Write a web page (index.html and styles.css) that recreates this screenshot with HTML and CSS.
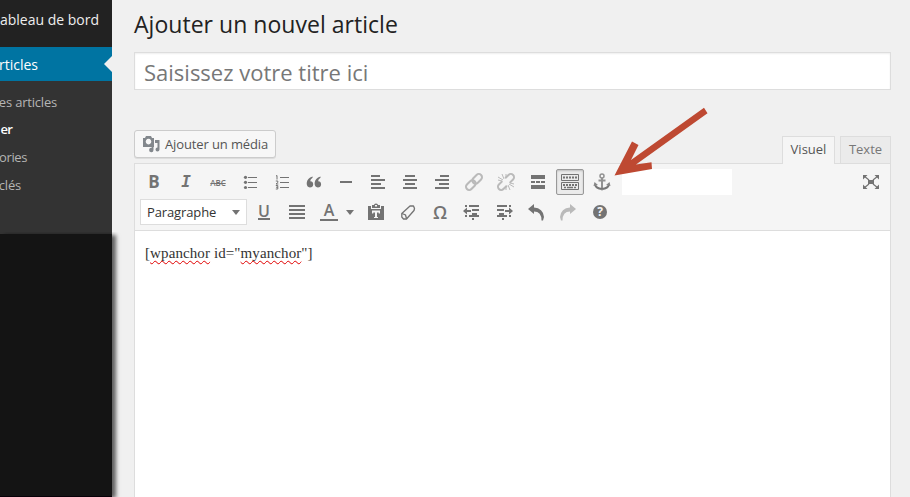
FILE: index.html
```html
<!DOCTYPE html>
<html lang="fr">
<head>
<meta charset="utf-8">
<title>Ajouter un nouvel article</title>
<link rel="stylesheet" href="styles.css">
</head>
<body>
<div class="admin">
  <nav class="sidebar">
    <div class="item dashboard"><span class="w-dash">ableau de bord</span></div>
    <div class="item current"><span class="w-art">rticles</span></div>
    <div class="submenu">
      <div><span class="w-all">es articles</span></div>
      <div class="active"><span class="w-add">er</span></div>
      <div><span class="w-cat">ories</span></div>
      <div><span class="w-tag">clés</span></div>
    </div>
    <div class="panel"></div>
  </nav>
  <main>
    <h1>Ajouter un nouvel article</h1>
    <div class="title-field"><span>Saisissez votre titre ici</span></div>
    <div class="tools">
      <div class="media">
        <svg width="18" height="18" viewBox="0 0 18 18"><path fill="#82878c" fill-rule="evenodd" d="M1 3h2l1-2h5l1 2h2v9H1zM6.500 3.800a2.800 2.800 0 1 0 .01 0z"/><path fill="#82878c" d="M13 5h4.500v9.500a2 2 0 1 1-2-2V8H13zM11.500 11v4a2.200 2.200 0 1 1-1.800-2.200V11z"/></svg>
        <span>Ajouter un média</span>
      </div>
      <div class="tabs"><div class="tab on"><span>Visuel</span></div><div class="tab"><span>Texte</span></div></div>
    </div>
    <div class="editor">
      <div class="toolbar">
        <div class="row">
          <div class="btn"><b class="bold">B</b></div>
          <div class="btn"><b class="ital">I</b></div>
          <div class="btn"><span class="abc">ABC</span></div>
          <div class="btn"><svg viewBox="0 0 20 20"><path class="thin" d="M8 5.500h9M8 10.500h9M8 15.500h9"/><g class="f"><circle cx="5.500" cy="5.300" r="1.600"/><circle cx="5.500" cy="10.300" r="1.600"/><circle cx="5.500" cy="15.500" r="1.600"/></g></svg></div>
          <div class="btn"><svg viewBox="0 0 20 20"><path class="thin" d="M8 5.500h9M8 10.500h9M8 15.500h9M4 4l1-.5v4M3.800 9h2v1.500l-1.800 1.500h2.300M3.800 13.500h2v3.500h-2M4 15.200h2"/></svg></div>
          <div class="btn"><svg viewBox="0 0 20 20"><path class="f" d="M8.600 4.400v1.300Q6.300 7 6.200 9.200 9 9 9.200 12.200q-.2 3.200-3.300 3.200Q2.600 15.200 2.700 11q.4-5 5.900-6.600zM16.500 4.400v1.300q-2.300 1.300-2.400 3.500 2.800-.2 3 3-.2 3.200-3.300 3.200-3.300-.2-3.200-4.400.4-5 5.900-6.600z"/></svg></div>
          <div class="btn"><svg viewBox="0 0 20 20"><path class="bar" d="M4 10h12"/></svg></div>
          <div class="btn"><svg viewBox="0 0 20 20"><path class="bar" d="M3 4h9M3 8h14M3 12h10M3 16h14"/></svg></div>
          <div class="btn"><svg viewBox="0 0 20 20"><path class="bar" d="M5 4h10M3 8h14M5 12h10M3 16h14"/></svg></div>
          <div class="btn"><svg viewBox="0 0 20 20"><path class="bar" d="M8 4h9M3 8h14M7 12h10M3 16h14"/></svg></div>
          <div class="btn dim"><svg viewBox="0 0 20 20"><g transform="rotate(-45 10 10)" fill="none" stroke="#737373" stroke-width="2"><rect x="0" y="6.800" width="11" height="6.400" rx="3.200"/><rect x="9" y="6.800" width="11" height="6.400" rx="3.200"/></g></svg></div>
          <div class="btn dim"><svg viewBox="0 0 20 20"><g transform="rotate(-45 10 10)" fill="none" stroke="#737373" stroke-width="2"><path d="M8 6.800H3.200a3.200 3.200 0 0 0 0 6.400H8M12 6.800h4.800a3.200 3.200 0 0 1 0 6.400H12"/></g><path class="thin" d="M6 2l2 5M2 5l5 3M10 2v4M18 15l-5-3M14 18l-2-5M10 18v-4M2 8l4 1M18 12l-4-1"/></svg></div>
          <div class="btn"><svg viewBox="0 0 20 20"><path class="f" d="M3 3h14v4H3zM3 13h14v4H3zM3 9h4v2H3zM8 9h4v2H8zM13 9h4v2h-4z"/></svg></div>
          <div class="btn pressed"><svg viewBox="0 0 20 20"><path class="thin" d="M1.500 2.500h17v6h-17zM1.500 10.500h17v7h-17z"/><path fill="none" stroke="#737373" stroke-width="2" stroke-dasharray="2 1" d="M3 5.500h14M3 13h14"/><path fill="none" stroke="#737373" stroke-width="1.500" d="M4 15.500h2M7 15.500h6M14 15.500h2"/></svg></div>
          <div class="btn"><svg viewBox="0 0 20 20"><g fill="none" stroke="#929292" stroke-width="2"><circle cx="10" cy="4" r="2" stroke-width="1.500"/><path d="M10 6v11M6.500 8.500h7"/><path d="M3 12.500q1 4 7 4.500 6-.5 7-4.500" stroke="#777"/></g><path fill="#888" d="M1.500 14l1-4 3.500 3zM18.500 14l-1-4-3.500 3zM8 17l2 1.800 2-1.800z"/></svg></div>
          <div class="blank"></div>
          <div class="btn full"><svg viewBox="0 0 20 20"><path class="f" d="M7 8h6v4H7zM2 3h4.500L2 7.500zM18 3v4.500L13.500 3zM2 17v-4.500L6.500 17zM18 17h-4.500l4.500-4.500z"/><path fill="none" stroke="#737373" stroke-width="1.200" d="M3 4l5 4M17 4l-5 4M3 16l5-4M17 16l-5-4"/></svg></div>
        </div>
        <div class="row">
          <div class="select"><span>Paragraphe</span><i class="caret"></i></div>
          <div class="btn under"><b>U</b></div>
          <div class="btn"><svg viewBox="0 0 20 20"><path class="bar" d="M2 4h16M2 8h16M2 12h16M2 16h16"/></svg></div>
          <div class="btn color"><b>A</b></div>
          <div class="more"><i class="caret"></i></div>
          <div class="btn"><svg viewBox="0 0 20 20"><path class="f" d="M2 4h3v3h10V4h3v14H2zM6 6V3h2q0-1.500 2-1.500T12 3h2v3z"/><path fill="#f5f5f5" d="M9 3h2v1.500H9zM6 8.500h8v3h-1.300V10.500H11V15h1v1H8v-1h1v-4.500H7.300v1H6z"/></svg></div>
          <div class="btn"><svg viewBox="0 0 20 20"><path fill="#f5f5f5" stroke="#737373" stroke-width="1.300" stroke-linejoin="round" d="M3.800 11.500L12 4h3.500l1 2.500-.5 2L8.500 17H5.500L3.800 15z"/><path fill="none" stroke="#737373" stroke-width="1.300" d="M4 11.500l3.500 1.500 1 3.500"/></svg></div>
          <div class="btn"><b class="omega">Ω</b></div>
          <div class="btn"><svg viewBox="0 0 20 20"><path class="bar" d="M3 4h2M7 4h10M10 8h7M10 12h5M3 14h2M7 14h10M10 17h2"/><path class="f" d="M1 9l4-3.500V8h4v2H5v2.500z"/></svg></div>
          <div class="btn"><svg viewBox="0 0 20 20"><path class="bar" d="M3 4h10M15 4h2M3 8h7M5 12h5M3 14h10M15 14h2M8 17h2"/><path class="f" d="M19 9l-4-3.500V8h-4v2h4v2.500z"/></svg></div>
          <div class="btn"><svg viewBox="0 0 20 20"><path class="f" d="M2 7l6-5v3.500q9 .5 10 9.500l-1 3.500h-1.500Q15.500 9.500 8 9.500V12z"/></svg></div>
          <div class="btn dim"><svg viewBox="0 0 20 20"><path class="f" d="M18 7l-6-5v3.500Q3 6 2 15l1 3.500h1.500Q4.500 9.500 12 9.500V12z"/></svg></div>
          <div class="btn"><b class="help">?</b></div>
        </div>
      </div>
      <div class="content">[<span class="spell">wpanchor</span> id="<span class="spell">myanchor</span>"]</div>
    </div>
  </main>
  <svg class="arrow" viewBox="0 0 100 74"><path fill="#be4932" d="M.5 71.500L18 37.500 24.500 41 17 56 90 3.700 93.500 9.200 22 60.500 37.500 58.300 38 65z"/></svg>
</div>
</body>
</html>
```
FILE: styles.css
```css
* { box-sizing: border-box; }
body { margin: 0; background: #f0f0f0; font-family: "Open Sans", sans-serif; color: #555; overflow: hidden; }
.admin { display: flex; width: 910px; height: 497px; position: relative; overflow: hidden; }
.sidebar { width: 112px; display: flex; flex-direction: column; background: #222; color: #eee; flex: none; }
.sidebar span { display: flex; justify-content: flex-end; white-space: nowrap; }
.item { font-size: 14px; position: relative; }
.dashboard { height: 47px; line-height: 39px; }
.current { height: 34px; line-height: 35px; background: #0074a2; color: #fff; }
.current::after { content: ""; position: absolute; right: 0; top: 9px; border: 8px solid transparent; border-left: 0; border-right-color: #f0f0f0; }
.submenu { height: 153px; background: #333; color: #b5b5b5; font-size: 13px; line-height: 27.6px; padding-top: 8px; letter-spacing: -.2px; }
.submenu .active { color: #fff; font-weight: 600; margin: -1px 0 1px; letter-spacing: -.8px; }
.w-dash { width: 99px; }
.w-art { width: 38px; }
.w-all { width: 57px; }
.w-add { width: 12px; }
.w-cat { width: 27px; letter-spacing: -.4px; }
.w-tag { width: 21px; }
.panel { flex: 1; background: #141414; border-bottom: 1px solid #080008; box-shadow: 4px 1px 4px rgba(0,0,0,.6); clip-path: inset(-2px -10px 0 0); }
main { flex: 1; padding: 0 19px 0 22px; display: flex; flex-direction: column; }
h1 { margin: 0; height: 52px; font-size: 23px; line-height: 48px; font-weight: 400; color: #222; white-space: nowrap; letter-spacing: .03px; }
.title-field { height: 38px; border: 1px solid #ddd; background: #fff; padding-left: 9px; font-size: 22px; line-height: 39px; color: #777; box-shadow: inset 0 1px 2px rgba(0,0,0,.07); }
.tools { height: 73px; display: flex; justify-content: space-between; align-items: flex-end; }
.media { width: 142px; height: 28px; margin-bottom: 5px; border: 1px solid #ccc; border-radius: 3px; background: #f7f7f7; box-shadow: 0 1px 0 rgba(0,0,0,.08); display: flex; align-items: center; padding-left: 7px; gap: 5px; font-size: 13px; white-space: nowrap; letter-spacing: -.12px; }
.tabs { display: flex; gap: 5px; }
.tab { height: 27px; width: 51px; border: 1px solid #ddd; border-bottom: 0; background: #ebebeb; color: #777; font-size: 13px; line-height: 25px; text-align: center; }
.tab.on { width: 53px; height: 28px; margin-bottom: -1px; background: #f5f5f5; color: #555; position: relative; z-index: 1; }
.editor { flex: 1; border: 1px solid #ddd; border-bottom: 0; background: #fff; }
.toolbar { height: 67px; background: #f5f5f5; border-bottom: 1px solid #ddd; padding: 3px 3px 0; }
.row { display: flex; height: 30px; align-items: center; }
.btn { width: 32px; height: 30px; flex: none; display: flex; align-items: center; justify-content: center; color: #737373; }
.btn svg { width: 20px; height: 20px; flex: none; }
.f { fill: #737373; }
.thin { fill: none; stroke: #737373; stroke-width: 1; }
.bar { fill: none; stroke: #737373; stroke-width: 2; }
.dim { opacity: .45; }
.bold { font-size: 17px; line-height: 20px; }
.ital { font: italic bold 16px/20px "DejaVu Sans Mono", monospace; }
.abc { font-size: 8px; font-weight: 600; letter-spacing: -.1px; text-decoration: line-through; }
.pressed { width: 28px; height: 26px; margin: 0 2px; border: 1px solid #999; border-radius: 2px; background: #ebebeb; box-shadow: inset 0 1px 2px rgba(0,0,0,.2); }
.blank { width: 110px; height: 26px; margin-left: 4px; background: #fff; }
.full { margin-left: auto; }
.select { width: 107px; height: 26px; margin-left: 2px; border: 1px solid #ddd; background: #fff; color: #333; font-size: 13px; letter-spacing: -.12px; display: flex; align-items: center; justify-content: space-between; padding: 0 6px; }
.caret { border: 4px solid transparent; border-top: 5px solid #737373; border-bottom: 0; }
.under { width: 34px; }
.under b { font-size: 16px; font-weight: 600; line-height: 13px; height: 15px; border-bottom: 2px solid #737373; }
.color b { width: 18px; text-align: center; font-size: 16px; font-weight: 600; line-height: 13px; height: 17px; border-bottom: 2px solid #737373; }
.more { width: 15px; display: flex; justify-content: center; margin-left: -3px; margin-right: 3px; }
.omega { font-size: 18px; font-weight: 600; line-height: 20px; }
.help { width: 14px; height: 14px; border-radius: 50%; background: #737373; color: #f5f5f5; font-size: 12px; line-height: 14px; text-align: center; }
.content { padding: 11px 10px; font: 15px/22px "Liberation Serif", serif; color: #333; white-space: nowrap; letter-spacing: .1px; }
.spell { text-decoration: underline wavy #e00000 1px; text-underline-offset: 2px; text-decoration-skip-ink: none; }
.arrow { position: absolute; left: 614px; top: 104px; width: 100px; height: 74px; }
```
